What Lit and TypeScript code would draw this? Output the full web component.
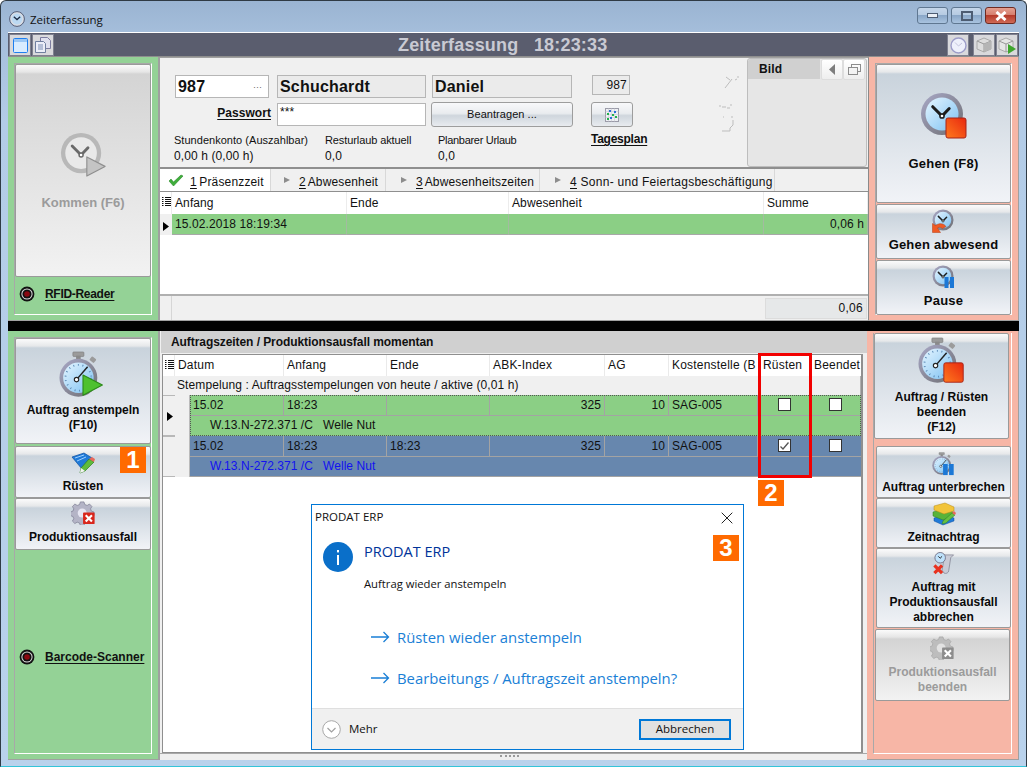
import { LitElement, html, css, svg } from "lit";
import { customElement } from "lit/decorators.js";

const hands = (cx: number, cy: number, r: number, c: string) => svg`
  <path d="M${cx - r * 0.62} ${cy - r * 0.62}L${cx} ${cy}L${cx + r * 0.48} ${cy - r * 0.5}" fill="none" stroke="${c}" stroke-width="${r * 0.2}" stroke-linecap="round"/>
  <circle cx="${cx}" cy="${cy}" r="${r * 0.14}" fill="#fff" stroke="${c}" stroke-width="${r * 0.1}"/>`;

const stopOverlay = (x: number, y: number, s: number) => svg`
  <rect x="${x}" y="${y}" width="${s}" height="${s}" rx="2" fill="url(#rs)" stroke="#a5241a" stroke-width="1"/>`;

const playOverlay = (x: number, y: number, s: number, f: string, st: string) => svg`
  <path d="M${x} ${y}L${x + s} ${y + s * 0.52}L${x} ${y + s * 1.05}Z" fill="${f}" stroke="${st}" stroke-width="1.2" stroke-linejoin="round"/>`;

const defs = svg`<defs>
  <linearGradient id="rs" x1="1" y1="0" x2="0" y2="1"><stop offset="0" stop-color="#e8280f"/><stop offset="1" stop-color="#ff7a1e"/></linearGradient>
  <linearGradient id="face" x1="0" y1="0" x2="1" y2="1"><stop offset="0" stop-color="#e6f5ff"/><stop offset="1" stop-color="#7cc1f2"/></linearGradient>
  <linearGradient id="ring" x1="0" y1="0" x2="1" y2="1"><stop offset="0" stop-color="#a9a9c8"/><stop offset="1" stop-color="#6d6d70"/></linearGradient>
</defs>`;

const clock = (size: number, over: "stop" | "play" | "back" | "pause") => {
  const off = over === "play";
  return html`<svg width="${size}" height="${size}" viewBox="0 0 48 48">
    ${defs}
    <circle cx="22" cy="22" r="21" fill="${off ? "#b8b8b8" : "url(#ring)"}"/>
    <circle cx="22" cy="22" r="16.5" fill="${off ? "#e9e9e9" : "url(#face)"}"/>
    ${hands(22, 24, 15, off ? "#6a6a6a" : "#1c1c1c")}
    ${over === "stop" ? stopOverlay(26, 26, 20) : ""}
    ${over === "play" ? playOverlay(28, 26, 19, "#c4c4c4", "#8f8f8f") : ""}
    ${over === "back" ? svg`<path d="M1 47V29l6 4c8-6 17-4 21 2l-7 4c-4-3-7-3-10-1l6 9Z" fill="#ef5a24" stroke="#b53a10" stroke-width="1"/>` : ""}
    ${over === "pause" ? svg`<rect x="25" y="24" width="8" height="22" fill="#1c78d6"/><rect x="36" y="24" width="8" height="22" fill="#1c78d6"/>` : ""}
  </svg>`;
};

const stopwatch = (size: number, over: "stop" | "play" | "pause") => html`
  <svg width="${size}" height="${size}" viewBox="0 0 52 52">
    ${defs}
    <rect x="15" y="1" width="12" height="5" rx="1" fill="#9b9b9b" stroke="#777" stroke-width=".6"/>
    <rect x="18.5" y="5" width="5" height="5" fill="#8a8a8a"/>
    <rect x="34" y="7" width="6" height="5" rx="1" fill="#9b9b9b" transform="rotate(40 37 9)"/>
    <circle cx="21" cy="29" r="20.5" fill="url(#ring)"/>
    <circle cx="21" cy="29" r="16.5" fill="url(#face)"/>
    <circle cx="21" cy="29" r="14" fill="none" stroke="#5a88b5" stroke-width="2" stroke-dasharray="1 4"/>
    <path d="M19 31L31 17" stroke="#222" stroke-width="1.6"/>
    <circle cx="19" cy="31" r="2.4" fill="#fff" stroke="#222" stroke-width="1.2"/>
    ${over === "stop" ? stopOverlay(28, 28, 21) : ""}
    ${over === "play" ? playOverlay(26, 26, 21, "#4ec12f", "#2c8a1a") : ""}
    ${over === "pause" ? svg`<rect x="24" y="26" width="10" height="24" fill="#1c78d6"/><rect x="37" y="26" width="10" height="24" fill="#1c78d6"/>` : ""}
  </svg>`;

const ruesten = html`<svg width="24" height="22" viewBox="0 0 24 22">
  <path d="M1 5L13 1l8 5-10 11Z" fill="#1f7ad8" stroke="#0f4f9f" stroke-width=".7"/>
  <path d="M4 6L13 3M6 9l9-4" stroke="#9fd0ff" stroke-width="1"/>
  <path d="M10 16l8-9 5 3-9 9-5 2Z" fill="#5fbb3b" stroke="#2e7d1f" stroke-width=".7"/>
  <path d="M18 7l5 3 1-3-3-2Z" fill="#e8685a"/>
  <path d="M9 21l5-2-4-3Z" fill="#f3f3f3"/>
</svg>`;

const books = html`<svg width="24" height="24" viewBox="0 0 24 24">
  <path d="M2 16l10-3 10 3v3l-11 4-9-4Z" fill="#1f7ad8" stroke="#0f4f9f" stroke-width=".5"/>
  <path d="M1 10l11-3 9 3v4l-10 4-10-4Z" fill="#58b33a" stroke="#2e7d1f" stroke-width=".5"/>
  <path d="M2 4l11-3 9 4v4l-10 3-10-4Z" fill="#f2c43a" stroke="#b48a16" stroke-width=".5"/>
  <path d="M11 19l9-8 3 2-9 8-4 1Z" fill="#66c040" stroke="#2e7d1f" stroke-width=".5"/>
  <path d="M20 11l3 2 1-2-2-2Z" fill="#e8685a"/>
</svg>`;

const gearPath = "M10 1h4l1 3 2.6 1 2.6-1.6 2.8 2.8-1.6 2.6 1 2.6 3 1v4l-3 1-1 2.6 1.6 2.6-2.8 2.8-2.6-1.6-2.6 1-1 3h-4l-1-3-2.6-1-2.6 1.6-2.8-2.8 1.6-2.6-1-2.6-3-1v-4l3-1 1-2.6-1.6-2.6 2.8-2.8 2.6 1.6 2.6-1Z";
const gear = (off: boolean) => html`<svg width="25" height="24" viewBox="0 0 27 27">
  <path d="${gearPath}" fill="${off ? "#bdbdbd" : "#b4b4c6"}" stroke="${off ? "#a0a0a0" : "#75758a"}" stroke-width=".7"/>
  <circle cx="12" cy="13.5" r="5" fill="${off ? "#e2e2e2" : "#e6e6f2"}"/>
  <rect x="13" y="13" width="13" height="13" rx="1" fill="${off ? "#8d8d8d" : "#d9261c"}"/>
  <path d="M16 16l7 7M23 16l-7 7" stroke="#fff" stroke-width="2.4"/>
</svg>`;

const scroll = html`<svg width="24" height="23" viewBox="0 0 24 24">
  <path d="M6 3h16l-3 3-2 13c0 3-3 4-5 3l-2-3 2-12C12 5 9 3 6 3Z" fill="#c9cbd6" stroke="#7a7a8a" stroke-width=".7"/>
  <circle cx="8" cy="6" r="5.5" fill="#bfe2fb" stroke="#77778c" stroke-width="1"/>
  <path d="M6 4.5L8 6.5 10 4.5" stroke="#222" fill="none"/>
  <path d="M2 14l8 8M10 14l-8 8" stroke="#e8321f" stroke-width="3.4"/>
</svg>`;

const tagesplanIcon = html`<svg width="14" height="14" viewBox="0 0 14 14">
  <rect x=".5" y=".5" width="13" height="13" fill="#eef0f4" stroke="#9b9ba8"/>
  <path d="M.5 3.5h13M.5 6.5h13M.5 9.5h13M3.5 .5v13M6.5 .5v13M9.5 .5v13" stroke="#c9c9d3" stroke-width=".6"/>
  <rect x="4" y="2" width="2" height="2" fill="#2a6fd8"/><rect x="9" y="3" width="2" height="2" fill="#2a6fd8"/>
  <rect x="2" y="5" width="2" height="2" fill="#22b14c"/><rect x="7" y="6" width="2" height="2" fill="#22b14c"/>
  <rect x="5" y="9" width="2" height="2" fill="#2a6fd8"/><rect x="10" y="8" width="2" height="2" fill="#22b14c"/>
  <rect x="2" y="10" width="2" height="2" fill="#22b14c"/>
</svg>`;

const lamp = html`<svg class="lamp" width="16" height="16" viewBox="0 0 16 16">
  <circle cx="8" cy="8" r="7.4" fill="#111"/><circle cx="8" cy="8" r="5.6" fill="#ddd"/>
  <circle cx="8" cy="8" r="4.6" fill="#111"/><circle cx="8" cy="8" r="2.8" fill="#8b0710"/>
</svg>`;

const tabArrow = html`<svg width="8" height="8" viewBox="0 0 8 8"><path d="M1 1l6 3-6 3Z" fill="#8d8d8d"/></svg>`;
const check = html`<svg width="16" height="13" viewBox="0 0 16 13"><path d="M1 7l4.5 5L15 2 13 1 5.5 8 3 5Z" fill="#3fae3b" stroke="#2a8a2a" stroke-width=".6"/></svg>`;
const rowMark = html`<svg width="6" height="9" viewBox="0 0 6 9"><path d="M0 0l6 4.5L0 9Z" fill="#000"/></svg>`;
const listMark = html`<svg width="9" height="9" viewBox="0 0 9 9"><path d="M0 .5h1.5M3 .5h6M0 2.5h1.5M3 2.5h6M0 4.5h1.5M3 4.5h6M0 6.5h1.5M3 6.5h6M0 8.5h1.5M3 8.5h6" stroke="#111" fill="none"/></svg>`;
const tick = html`<svg width="11" height="10" viewBox="0 0 11 10"><path d="M1.5 5.5L4 8l5.5-6.5" stroke="#555" stroke-width="1.3" fill="none"/></svg>`;
const arrow = html`<svg width="19" height="12" viewBox="0 0 19 12"><path d="M0 6h17.5M12.5 1l5 5-5 5" stroke="#1a7fd6" stroke-width="1.3" fill="none"/></svg>`;

const tools = {
  win: html`<svg width="15" height="15" viewBox="0 0 15 15"><rect x=".5" y=".5" width="14" height="14" rx="1" fill="#d9ecff" stroke="#1e7ff0"/><rect x="1" y="1" width="13" height="3" fill="#9cc8f5"/></svg>`,
  docs: html`<svg width="16" height="16" viewBox="0 0 16 16"><path d="M5.5 .5h7l3 3v8h-10Z" fill="#dfe0ee" stroke="#7d7da0"/><path d="M.5 4.5h8l2 2v9h-10Z" fill="#eceef8" stroke="#6f7f9f"/><path d="M3 8h5M3 10h5M3 12h5" stroke="#7d8fb5"/></svg>`,
  disc: html`<svg width="17" height="17" viewBox="0 0 17 17"><circle cx="8.5" cy="8.5" r="7.5" fill="#eef0fb" stroke="#9d9dc9" stroke-width="1.4"/><path d="M5 5.5L8.5 9 12 6" stroke="#c3c3dd" fill="none"/></svg>`,
  box: html`<svg width="16" height="16" viewBox="0 0 16 16"><path d="M1 4l7-3 7 3v8l-7 3-7-3Z" fill="#ddd" stroke="#aaa"/><path d="M1 4l7 3 7-3M8 7v8" stroke="#999" fill="none"/><path d="M8 7l7-3v8l-7 3Z" fill="#b5b5b5"/></svg>`,
  boxPlay: html`<svg width="19" height="17" viewBox="0 0 19 17"><path d="M1 4l7-3 7 3v8l-7 3-7-3Z" fill="#e6e6e6" stroke="#aaa"/><path d="M1 4l7 3 7-3M8 7v8" stroke="#999" fill="none"/><path d="M10 7l8 5-8 5Z" fill="#3ea52c"/></svg>`,
};

const cols = ["Datum", "Anfang", "Ende", "ABK-Index", "AG", "Kostenstelle (B", "Rüsten", "Beendet"];

@customElement("app-root")
export class AppRoot extends LitElement {
  static styles = css`
    :host { display: block; width: 1027px; height: 768px; overflow: hidden; background: #fff; }
    * { box-sizing: border-box; }
    .window { position: relative; width: 1027px; height: 767px; display: flex; flex-direction: column;
      font: 12px/15px "Liberation Sans", Arial, sans-serif; letter-spacing: .1px; color: #111;
      background: linear-gradient(#9ab4d2 0, #a5bedb 32px, #b3cce7 120px, #b9d2ec 100%);
      border-radius: 6px 6px 0 0; border: 1px solid #2f3a44; border-bottom: 1px solid #33c4d8; overflow: hidden; }
    .title { height: 31px; flex: none; display: flex; align-items: center; padding: 5px 10px 0 8px; gap: 5px;
      font: 11.5px "Open Sans", sans-serif; color: #111; letter-spacing: 0; }
    .title svg { flex: none; }
    .title .name { flex: 1; }
    .ctl { display: flex; gap: 3px; margin-top: -7px; }
    .ctl i { width: 31px; height: 17px; border: 1px solid #5f7791; border-radius: 3px; display: flex; align-items: center; justify-content: center;
      background: linear-gradient(#c5d6ea 0, #b6cbe2 45%, #8aa7c8 50%, #a9c3df 100%); }
    .ctl i.close { background: linear-gradient(#e49f90 0, #d67f6e 45%, #b53a2a 50%, #cf6a56 100%); border-color: #6e2b22; }
    .main { width: 1011px; margin-left: 7px; flex: none; border-top: 1px solid #fff; }
    .toolbar { height: 24px; background: #5a5d6e; border-bottom: 1px solid #8e8e8e; display: flex; align-items: stretch; position: relative; padding: 1px 0 0 1px; }
    .toolbar h1 { margin: 0; position: absolute; left: 390px; top: 2px; font: bold 18px/20px "Liberation Sans", sans-serif; color: #c9cad3; letter-spacing: .18px; white-space: pre; }
    .tb { width: 22px; height: 22px; display: flex; align-items: center; justify-content: center; background: #d9d9dc; border: 1px solid #7f8190; margin-right: 1px; }
    .tb.sp { flex: 1; background: none; border: 0; }
    .tb.gap { margin-right: 4px; }
    .row { display: flex; }
    .row.top { height: 264px; }
    .row.bottom { height: 429px; }
    .black { height: 10px; background: #000; }
    .side { display: flex; padding: 6px 6px 5px; border-right: 1px solid #a0a0a0; border-bottom: 1px solid #a0a0a0; }
    .green { background: #94d296; width: 151px; }
    .red { background: #f7b6a6; width: 150px; }
    .row.bottom .red { width: 152px; padding: 2px 6px 5px; }
    .inner { flex: 1; border-left: 1px solid #a8a8a8; border-right: 1px solid #fff; border-bottom: 1px solid #fff; border-top: 1px solid #a8a8a8; display: flex; flex-direction: column; min-width: 0; }
    .row.bottom .red .inner { border-top: 0; }
    .btn { flex: none; border: 1px solid #9a9a9a; border-radius: 2px; display: flex; flex-direction: column; align-items: center; font-weight: bold; text-align: center; letter-spacing: 0;
      background: linear-gradient(#fbfbfb 0, #e6e8ea 7px, #c9d3dc 9px, #f1f3f7 100%); color: #0a0a0a; }
    .btn.off { color: #9b9b9b; background: linear-gradient(#fbfbfb 0, #e6e6e6 7px, #d4d4d4 9px, #f2f2f2 100%); }
    .btn span { display: block; }
    .btn.big13 span { font-size: 13px; letter-spacing: .2px; }
    .kommen { height: 213px; padding-top: 67px; gap: 17px; color: #a0a0a0; }
    .kommen b { font-size: 13px; letter-spacing: 0; }
    .reader { display: flex; align-items: center; gap: 10px; padding-left: 4px; font-weight: bold; letter-spacing: 0; }
    .reader u { text-underline-offset: 2px; }
    .reader.r1 { height: 34px; letter-spacing: -.3px; }
    .reader.r2 { margin-top: 99px; }
    .gehen { height: 139px; padding-top: 27px; gap: 16px; }
    .small { height: 55px; padding-top: 4px; gap: 4px; }
    .gap2 { margin-top: 1px; }
    .mid { flex: 1; min-width: 0; display: flex; flex-direction: column; background: #f0f0f0; }
    .top .mid { border-left: 1px solid #a0a0a0; border-right: 1px solid #8a8a8a; border-top: 1px solid #a0a0a0; border-bottom: 1px solid #a0a0a0; }
    .form { height: 111px; flex: none; border-bottom: 2px solid #8f8f8f; display: grid; padding: 17px 0 0 15px;
      grid-template-columns: 94px 8px 149px 6px 140px 20px 40px; grid-template-rows: 23px 28px 22px 16px; position: relative; }
    .field { border: 1px solid #b6b6b6; display: flex; align-items: center; font: bold 16px/20px "Liberation Sans", sans-serif; letter-spacing: .2px; padding-left: 2px; background: #ebebeb; height: 23px; }
    .field.w { background: #fff; justify-content: space-between; padding-right: 6px; }
    .dots { font: 9px/10px "Liberation Sans", sans-serif; color: #666; letter-spacing: 0; }
    .c3 { grid-column: 3; } .c5 { grid-column: 5; } .c7 { grid-column: 7; }
    .num { font: 12px/15px "Liberation Sans", sans-serif; background: #ebebeb; justify-content: flex-end; padding-right: 2px; height: 20px; width: 38px; letter-spacing: .2px; }
    .pwl { grid-column: 1; grid-row: 2; display: flex; justify-content: flex-end; align-items: center; font-weight: bold; height: 23px; margin-top: 4px; letter-spacing: .05px; margin-right: -2px; }
    u { text-underline-offset: 1.5px; }
    .pw { grid-column: 3; grid-row: 2; margin-top: 5px; height: 23px; border: 1px solid #b6b6b6; background: #fff; padding: 1px 2px 0; }
    .pbtn { border: 1px solid #9d9d9d; border-radius: 3px; height: 25px; margin-top: 4px; display: flex; align-items: center; justify-content: center; letter-spacing: .05px; font-size: 11px;
      background: linear-gradient(#f8f8fa 0, #e9ecef 45%, #cfd6dd 55%, #e8ebef 100%); }
    .pbtn.b1 { grid-column: 5; grid-row: 2; margin-left: -1px; margin-right: -1px; }
    .pbtn.b2 { grid-column: 7; grid-row: 2; margin-left: -1px; margin-right: -1px; }
    .stat { font-size: 11px; line-height: 14px; white-space: nowrap; }
    .stat b { display: block; font-weight: normal; font-size: 12px; letter-spacing: .1px; line-height: 15px; margin-top: 2px; }
    .stats { grid-column: 1 / span 7; grid-row: 3 / span 2; display: flex; margin-top: 7px; margin-left: -1px; }
    .s1 { width: 151px; letter-spacing: .03px; } .s2 { width: 113px; letter-spacing: -.1px; } .s3 { letter-spacing: -.3px; }
    .s2 b, .s3 b { letter-spacing: .1px; }
    .tgp { grid-column: 7; grid-row: 3; font-weight: bold; letter-spacing: -.25px; margin-top: 6px; white-space: nowrap; margin-left: -1px; }
    .speck { position: absolute; left: 548px; top: 10px; }
    .bild { position: absolute; left: 587px; top: 0; width: 120px; height: 109px; background: #e6e6e6; border: 1px solid #bdbdbd; border-radius: 3px; }
    .bild .hd { height: 20px; width: 72px; background: #d0d0d0; font-weight: bold; padding: 3px 0 0 11px; border-radius: 3px 0 0 0; }
    .bild i { position: absolute; top: 0; height: 21px; width: 22px; background: linear-gradient(#fff, #eee); display: flex; align-items: center; justify-content: center; border-radius: 2px; border: 1px solid #ddd; }
    .tabs { height: 23px; flex: none; display: flex; border-bottom: 1px solid #8f8f8f; }
    .tab { display: flex; align-items: center; height: 22px; padding-top: 4px; border-right: 1px solid #d8d8d8; letter-spacing: .15px; white-space: pre; }
    .tab svg { margin-right: 8px; flex: none; margin-top: -4px; }
    .tab span { word-spacing: -1px; }
    .t1 { width: 111px; background: #fff; padding-left: 8px; }
    .t1 svg { margin-right: 6px; }
    .t2 { width: 115px; padding-left: 12px; } .t3 { width: 154px; padding-left: 14px; } .t4 { width: 235px; padding-left: 14px; letter-spacing: .27px; }
    .t4 span { word-spacing: 0; }
    .tgrid { flex: 1; background: #fff; display: flex; flex-direction: column; min-height: 0; }
    .thead, .trow { display: grid; grid-template-columns: 12px 175px 162px 255px 1fr; flex: none; }
    .thead { height: 22px; }
    .thead > div { border-right: 1px solid #ececec; padding: 4px 3px 0; overflow: hidden; white-space: nowrap; }
    .thead > div:first-child, .gh > div:first-child { padding: 3px 0 0 2px; }
    .trow { height: 21px; background: #8bcf85; border-bottom: 1px solid #a8a8a8; }
    .trow > div { border-right: 1px solid #a3bba0; padding: 3px 3px 0; }
    .trow > .mk { background: #f0f0f0; border-right: 0; padding: 6px 0 0 3px; }
    .r { text-align: right; }
    .tspace { flex: 1; border-bottom: 2px solid #b0b0b0; }
    .tfoot { height: 24px; flex: none; background: #f0f0f0; display: grid; grid-template-columns: 12px 1fr 103px; }
    .tfoot > :first-child { border-right: 1px solid #d6d6d6; }
    .tsum { grid-column: 3; margin: 2px 1px 1px 0; background: #e6e8e9; border: 1px solid #dcdcdc; text-align: right; padding: 2px 3px 0 0; letter-spacing: .3px; }
    .lower-hd { height: 22px; flex: none; background: #d0d0d0; font-weight: bold; padding: 4px 0 0 10px; letter-spacing: -.07px; margin-left: 1px; }
    .gwrap { flex: 1; min-height: 0; padding: 1px 4px 0 2px; background: #f0f0f0; display: flex; }
    .bottom .mid { border-left: 1px solid #a0a0a0; }
    .grid2 { flex: 1; border: 1px solid #8f8f8f; border-right-width: 2px; background: #fff; display: flex; flex-direction: column; }
    .gh { display: grid; grid-template-columns: 12px 109px 103px 103px 115px 64px 91px 51px 1fr; height: 21px; flex: none; }
    .gh > div { padding: 3px 3px 0 3px; border-right: 1px solid #eaeaea; overflow: hidden; white-space: nowrap; letter-spacing: .2px; }
    .gh > div:last-child { border-right: 0; padding-right: 0; }
    .grp { height: 19px; flex: none; background: #f0f0f0; padding: 2px 0 0 14px; letter-spacing: .1px; border-right: 1px solid #b0b0b0; white-space: nowrap; }
    .rec { display: flex; flex: none; height: 41px; }
    .recmk { width: 12px; flex: none; background: #f0f0f0; border-top: 1px solid #b8b8b8; border-bottom: 1px solid #b8b8b8; display: flex; align-items: center; padding: 2px 0 0 4px; }
    .indent { width: 15px; flex: none; background: #f0f0f0; border-right: 1px solid #bbb; }
    .data { flex: 1; min-width: 0; display: flex; flex-direction: column; }
    .data.g { background: #8bcf85; outline: 1px dotted #555; outline-offset: -1px; }
    .data.b { background: #6787ae; }
    .cells { height: 21px; display: grid; grid-template-columns: 94px 103px 103px 115px 64px 89px 52px 1fr; border-bottom: 1px solid #a3a3a3; }
    .cells > div { border-right: 1px solid #a3a3a3; padding: 3px 3px 0 3px; display: flex; justify-content: flex-start; }
    .cells > .r { justify-content: flex-end; }
    .cells > .ch { justify-content: center; padding: 3px 0 0; border-right: 0; }
    .sub { flex: 1; padding: 2px 0 0 20px; white-space: pre; letter-spacing: .05px; }
    .data.b .sub { color: #1212f0; border-bottom: 1px solid #a3a3a3; }
    .cb { width: 13px; height: 13px; background: #fff; border: 1px solid #333; display: flex; align-items: center; justify-content: center; }
    .white { flex: 1; }
    .splitter { height: 7px; flex: none; background: #efefef; border-top: 1px solid #a8a8a8; display: flex; justify-content: center; padding-right: 9px; }
    .grip { width: 19px; border-top: 2px dotted #9a9a9a; margin-top: 1px; height: 3px; }
    .tag { position: absolute; width: 26px; height: 26px; background: #ff6a00; color: #fff; font: bold 24px/26px "Liberation Sans", sans-serif; text-align: center; letter-spacing: 0; }
    .frame { position: absolute; left: 757px; top: 352px; width: 54px; height: 125px; border: 3px solid #f20000; }
    .dlg { position: absolute; left: 310px; top: 503px; width: 433px; height: 246px; background: #fff; border: 1px solid #0078d7; display: flex; flex-direction: column; font: 12px/16px "Open Sans", sans-serif; letter-spacing: 0; color: #111; }
    .dlg .dt { height: 24px; flex: none; display: flex; justify-content: space-between; padding: 4px 10px 0 3px; font-size: 11.5px; }
    .dlg .body { flex: 1; min-height: 0; display: flex; flex-direction: column; padding: 0 0 0 52px; position: relative; }
    .dlg .info { position: absolute; left: 11px; top: 13px; }
    .dh { font-size: 14.5px; line-height: 20px; color: #003399; margin-top: 13px; }
    .dm { font-size: 11.25px; margin-top: 14px; line-height: 16px; }
    .lnk { display: flex; align-items: center; gap: 7px; color: #1a7fd6; font-size: 14.85px; line-height: 22px; margin-left: 7px; }
    .lnk.a { margin-top: 34px; } .lnk.b { margin-top: 19px; }
    .ft { height: 41px; flex: none; background: #f0f0f0; border-top: 1px solid #dfdfdf; display: flex; align-items: center; justify-content: space-between; padding: 0 12px 0 10px; font-size: 11.5px; }
    .ft .more { display: flex; align-items: center; gap: 8px; }
    .abb { width: 92px; height: 21px; background: #e1e1e1; border: 2px solid #0078d7; display: flex; align-items: center; justify-content: center; }
  `;

  render() {
    return html`<div class="window">
      <div class="title">
        <svg width="16" height="16" viewBox="0 0 16 16"><circle cx="8" cy="8" r="7.4" fill="#d8dde5" stroke="#555e78"/><circle cx="8" cy="8" r="5.4" fill="#bcd9f2"/><path d="M4.8 5.8L8 8.6l3.2-2.8" stroke="#1c2a44" stroke-width="1.3" fill="none"/></svg>
        <span class="name">Zeiterfassung</span>
        <div class="ctl">
          <i><svg width="12" height="6" viewBox="0 0 12 6"><rect x=".5" y=".5" width="10" height="4" fill="#e9eef5" stroke="#4d5c72"/></svg></i>
          <i><svg width="12" height="10" viewBox="0 0 12 10"><rect x="1" y="1" width="10" height="8" fill="none" stroke="#4d5c72" stroke-width="2"/></svg></i>
          <i class="close"><svg width="12" height="10" viewBox="0 0 12 10"><path d="M1.5 1l9 8M10.5 1l-9 8" stroke="#fff" stroke-width="3"/></svg></i>
        </div>
      </div>
      <div class="main">
        <div class="toolbar">
          <h1>Zeiterfassung   18:23:33</h1>
          <div class="tb">${tools.win}</div>
          <div class="tb">${tools.docs}</div>
          <div class="tb sp"></div>
          <div class="tb gap">${tools.disc}</div>
          <div class="tb">${tools.box}</div>
          <div class="tb">${tools.boxPlay}</div>
        </div>
        <div class="row top">
          <div class="side green"><div class="inner">
            <div class="btn off kommen">${clock(46, "play")}<b>Kommen (F6)</b></div>
            <div class="reader r1">${lamp}<u>RFID-Reader</u></div>
          </div></div>
          <div class="mid">
            <div class="form">
              <div class="field w"><span>987</span><span class="dots">···</span></div>
              <div class="field c3">Schuchardt</div>
              <div class="field c5">Daniel</div>
              <div class="field num c7">987</div>
              <div class="pwl"><u>Passwort</u></div>
              <div class="pw">***</div>
              <div class="pbtn b1">Beantragen ...</div>
              <div class="pbtn b2">${tagesplanIcon}</div>
              <div class="stats">
                <div class="stat s1">Stundenkonto (Auszahlbar)<b>0,00 h (0,00 h)</b></div>
                <div class="stat s2">Resturlaub aktuell<b>0,0</b></div>
                <div class="stat s3">Planbarer Urlaub<b>0,0</b></div>
              </div>
              <div class="tgp"><u>Tagesplan</u></div>
              <svg class="speck" width="32" height="70" viewBox="0 0 32 70"><path d="M18 9l4 3M17 20l7-9M27 12l2-1M29 9h2M11 38h2M14 39h4M19 40h3M22 37h2M15 49h1M23 49h2M25 52v5l-3 3v3h-8" stroke="#bdbdbd" fill="none"/></svg>
              <div class="bild">
                <div class="hd">Bild</div>
                <i style="left:73px"><svg width="7" height="11" viewBox="0 0 7 11"><path d="M6 0v11L0 5.5Z" fill="#7d7d7d"/></svg></i>
                <i style="left:95px"><svg width="13" height="11" viewBox="0 0 13 11"><rect x="3.5" y=".5" width="9" height="7" fill="none" stroke="#8c8c8c"/><rect x=".5" y="3.5" width="9" height="7" fill="#f3f3f3" stroke="#8c8c8c"/></svg></i>
              </div>
            </div>
            <div class="tabs">
              <div class="tab t1">${check}<span><u>1</u> Präsenzzeit</span></div>
              <div class="tab t2">${tabArrow}<span><u>2</u> Abwesenheit</span></div>
              <div class="tab t3">${tabArrow}<span><u>3</u> Abwesenheitszeiten</span></div>
              <div class="tab t4">${tabArrow}<span><u>4</u> Sonn- und Feiertagsbeschäftigung</span></div>
            </div>
            <div class="tgrid">
              <div class="thead"><div>${listMark}</div><div>Anfang</div><div>Ende</div><div>Abwesenheit</div><div>Summe</div></div>
              <div class="trow"><div class="mk">${rowMark}</div><div>15.02.2018 18:19:34</div><div></div><div></div><div class="r">0,06 h</div></div>
              <div class="tspace"></div>
              <div class="tfoot"><div></div><div class="tsum">0,06</div></div>
            </div>
          </div>
          <div class="side red"><div class="inner">
            <div class="btn big13 gehen">${clock(48, "stop")}<span>Gehen (F8)</span></div>
            <div class="btn big13 small gap2">${clock(24, "back")}<span>Gehen abwesend</span></div>
            <div class="btn big13 small gap2">${clock(24, "pause")}<span>Pause</span></div>
          </div></div>
        </div>
        <div class="black"></div>
        <div class="row bottom">
          <div class="side green"><div class="inner">
            <div class="btn" style="height:106px;padding-top:12px;gap:4px">${stopwatch(48, "play")}<span>Auftrag anstempeln<br>(F10)</span></div>
            <div class="btn" style="height:52px;margin-top:2px;padding-top:5px;gap:5px">${ruesten}<span>Rüsten</span></div>
            <div class="btn" style="height:52px;padding-top:2px;gap:5px">${gear(false)}<span>Produktionsausfall</span></div>
            <div class="reader r2">${lamp}<u>Barcode-Scanner</u></div>
          </div></div>
          <div class="mid">
            <div class="lower-hd">Auftragszeiten / Produktionsausfall momentan</div>
            <div class="gwrap"><div class="grid2">
              <div class="gh"><div>${listMark}</div>${cols.map((c) => html`<div>${c}</div>`)}</div>
              <div class="grp">Stempelung : Auftragsstempelungen von heute / aktive (0,01 h)</div>
              <div class="rec">
                <div class="recmk">${rowMark}</div><div class="indent"></div>
                <div class="data g">
                  <div class="cells"><div>15.02</div><div>18:23</div><div></div><div class="r">325</div><div class="r">10</div><div>SAG-005</div><div class="ch"><span class="cb"></span></div><div class="ch"><span class="cb"></span></div></div>
                  <div class="sub">W.13.N-272.371 /C   Welle Nut</div>
                </div>
              </div>
              <div class="rec">
                <div class="recmk"></div><div class="indent"></div>
                <div class="data b">
                  <div class="cells"><div>15.02</div><div>18:23</div><div>18:23</div><div class="r">325</div><div class="r">10</div><div>SAG-005</div><div class="ch"><span class="cb">${tick}</span></div><div class="ch"><span class="cb"></span></div></div>
                  <div class="sub">W.13.N-272.371 /C   Welle Nut</div>
                </div>
              </div>
              <div class="white"></div>
            </div></div>
            <div class="splitter"><div class="grip"></div></div>
          </div>
          <div class="side red"><div class="inner">
            <div class="btn" style="height:106px;margin-right:2px;padding-top:3px;gap:5px">${stopwatch(48, "stop")}<span>Auftrag / Rüsten<br>beenden<br>(F12)</span></div>
            <div class="btn" style="height:52px;margin:7px 0 0 2px;padding-top:5px;gap:4px">${stopwatch(24, "pause")}<span>Auftrag unterbrechen</span></div>
            <div class="btn" style="height:50px;margin-left:2px;padding-top:3px;gap:4px">${books}<span>Zeitnachtrag</span></div>
            <div class="btn" style="height:80px;margin-left:2px;padding-top:3px;gap:5px">${scroll}<span>Auftrag mit<br>Produktionsausfall<br>abbrechen</span></div>
            <div class="btn off" style="height:72px;margin:1px 1px 0 1px;padding-top:6px;gap:5px">${gear(true)}<span>Produktionsausfall<br>beenden</span></div>
          </div></div>
        </div>
      </div>
      <div class="frame"></div>
      <div class="tag" style="left:119px;top:446px">1</div>
      <div class="tag" style="left:757px;top:479px">2</div>
      <div class="dlg">
        <div class="dt"><span>PRODAT ERP</span><svg width="12" height="12" viewBox="0 0 12 12" style="margin-top:3px"><path d="M.7.7l10.6 10.6M11.3.7L.7 11.3" stroke="#222" stroke-width="1"/></svg></div>
        <div class="body">
          <svg class="info" width="30" height="30" viewBox="0 0 30 30"><circle cx="15" cy="15" r="15" fill="#0a6fc9"/><rect x="14" y="13" width="2" height="10" fill="#fff"/><rect x="14" y="8" width="2" height="2.4" fill="#fff"/></svg>
          <div class="dh">PRODAT ERP</div>
          <div class="dm">Auftrag wieder anstempeln</div>
          <div class="lnk a">${arrow}<span>Rüsten wieder anstempeln</span></div>
          <div class="lnk b">${arrow}<span>Bearbeitungs / Auftragszeit anstempeln?</span></div>
        </div>
        <div class="ft">
          <div class="more"><svg width="19" height="19" viewBox="0 0 19 19"><circle cx="9.5" cy="9.5" r="8.8" fill="#fff" stroke="#a8a8a8"/><path d="M5.5 8l4 4 4-4" stroke="#a0a0a0" stroke-width="1.2" fill="none"/></svg><span>Mehr</span></div>
          <div class="abb">Abbrechen</div>
        </div>
      </div>
      <div class="tag" style="left:712px;top:534px">3</div>
    </div>`;
  }
}
